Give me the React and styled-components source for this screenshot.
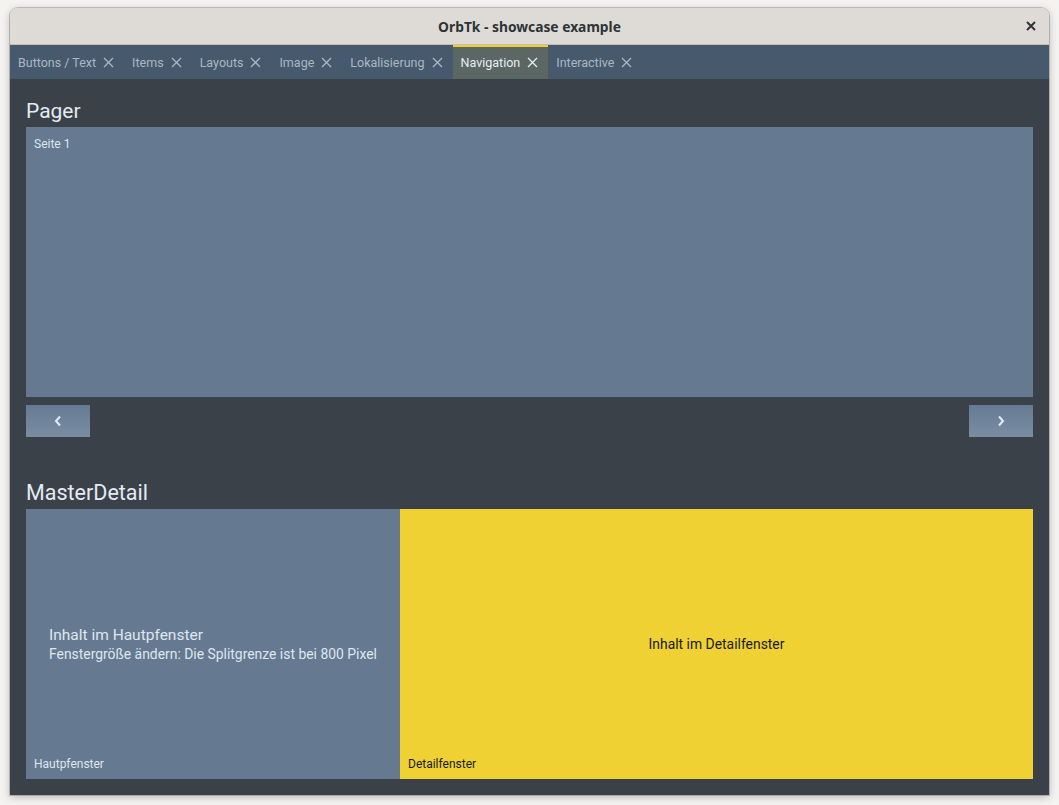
import React, { useState } from 'react';
import styled, { createGlobalStyle } from 'styled-components';

const GlobalStyle = createGlobalStyle`
  html, body {
    margin: 0;
    padding: 0;
    background: #f4f3f2;
  }
  body {
    font-family: Roboto, "Liberation Sans", sans-serif;
  }
`;

const Screen = styled.div`
  width: 1059px;
  height: 805px;
  padding: 8px 10px 0 10px;
  box-sizing: border-box;
`;

const Window = styled.div`
  width: 1039px;
  display: flex;
  flex-direction: column;
  border-radius: 8px 8px 0 0;
  overflow: hidden;
  box-shadow: 0 0 0 1px rgba(0, 0, 0, 0.18), 0 2px 8px rgba(0, 0, 0, 0.25);
`;

const TitleBar = styled.div`
  height: 36px;
  background: #dedbd7;
  border-bottom: 1px solid #c2bdb8;
  display: flex;
  align-items: center;
  justify-content: center;
  position: relative;
  font-family: "Noto Sans", "Open Sans", sans-serif;
  font-weight: 700;
  font-size: 13.8px;
  color: #2e3436;
`;

const CloseButton = styled.div`
  position: absolute;
  right: 13px;
  top: 13px;
  width: 10px;
  height: 10px;
  display: flex;
`;

const TabBar = styled.div`
  height: 34px;
  background: #475a6d;
  display: flex;
  align-items: stretch;
`;

const Tab = styled.div`
  display: flex;
  align-items: center;
  gap: 7px;
  padding: 0 10px 2px 8px;
  box-sizing: border-box;
  font-size: 12.5px;
  color: ${p => (p.$active ? '#e6ecf2' : '#a9b7c6')};
  background: ${p => (p.$active ? '#5b6763' : 'transparent')};
  border-top: 2px solid ${p => (p.$active ? '#f0ce2c' : 'transparent')};
  cursor: pointer;
`;

const Content = styled.div`
  background: #3b4149;
  padding: 16px;
  display: flex;
  flex-direction: column;
`;

const Heading = styled.div`
  height: 32px;
  line-height: 32px;
  font-size: ${p => p.$size || 21}px;
  color: #e4ebf2;
  margin-top: ${p => p.$gap || 0}px;
`;

const Pager = styled.div`
  height: 270px;
  background: #657a90;
  padding: 10px 8px;
  box-sizing: border-box;
  font-size: 12px;
  color: #dfe6ee;
`;

const NavRow = styled.div`
  display: flex;
  justify-content: space-between;
  margin-top: 8px;
`;

const NavButton = styled.button`
  width: 64px;
  height: 32px;
  border: none;
  padding: 0;
  display: flex;
  align-items: center;
  justify-content: center;
  background: linear-gradient(#647b92, #7a8ea3);
  cursor: pointer;
`;

const MasterDetail = styled.div`
  height: 270px;
  display: grid;
  grid-template-columns: 374px 1fr;
`;

const Pane = styled.div`
  position: relative;
  background: ${p => (p.$detail ? '#efd134' : '#657a90')};
  color: ${p => (p.$detail ? '#1a1a1a' : '#dfe6ee')};
  display: flex;
  flex-direction: column;
  justify-content: center;
  align-items: ${p => (p.$detail ? 'center' : 'flex-start')};
  padding: ${p => (p.$detail ? '0' : '0 0 0 23px')};
  box-sizing: border-box;
`;

const PaneLabel = styled.div`
  position: absolute;
  left: 8px;
  bottom: 8px;
  font-size: 12px;
`;

const MainTitle = styled.div`
  font-size: 15.5px;
  line-height: 20px;
`;

const MainSub = styled.div`
  font-size: 13.9px;
  line-height: 18px;
`;

const DetailText = styled.div`
  font-size: 13.9px;
`;

const TabClose = () => (
  <svg width="11" height="11" viewBox="0 0 11 11">
    <path d="M1 1 L10 10 M10 1 L1 10" stroke="currentColor" strokeWidth="1.3" fill="none" />
  </svg>
);

const Chevron = ({ dir }) => (
  <svg width="8" height="12" viewBox="0 0 8 12">
    <path
      d={dir === 'left' ? 'M6 1.5 L2 6 L6 10.5' : 'M2 1.5 L6 6 L2 10.5'}
      stroke="#e3ebf3"
      strokeWidth="2"
      fill="none"
    />
  </svg>
);

const tabs = ['Buttons / Text', 'Items', 'Layouts', 'Image', 'Lokalisierung', 'Navigation', 'Interactive'];

export default function App() {
  const [active, setActive] = useState('Navigation');
  const [page, setPage] = useState(1);

  return (
    <Screen>
      <GlobalStyle />
      <Window>
        <TitleBar>
          OrbTk - showcase example
          <CloseButton>
            <svg width="10" height="10" viewBox="0 0 10 10">
              <path d="M1 1 L9 9 M9 1 L1 9" stroke="#2e3436" strokeWidth="2" fill="none" />
            </svg>
          </CloseButton>
        </TitleBar>
        <TabBar>
          {tabs.map(t => (
            <Tab key={t} $active={t === active} onClick={() => setActive(t)}>
              {t}
              <TabClose />
            </Tab>
          ))}
        </TabBar>
        <Content>
          <Heading>Pager</Heading>
          <Pager>Seite {page}</Pager>
          <NavRow>
            <NavButton onClick={() => setPage(Math.max(1, page - 1))}>
              <Chevron dir="left" />
            </NavButton>
            <NavButton onClick={() => setPage(Math.min(3, page + 1))}>
              <Chevron dir="right" />
            </NavButton>
          </NavRow>
          <Heading $gap={40} $size={21.5}>MasterDetail</Heading>
          <MasterDetail>
            <Pane>
              <MainTitle>Inhalt im Hautpfenster</MainTitle>
              <MainSub>Fenstergröße ändern: Die Splitgrenze ist bei 800 Pixel</MainSub>
              <PaneLabel>Hautpfenster</PaneLabel>
            </Pane>
            <Pane $detail>
              <DetailText>Inhalt im Detailfenster</DetailText>
              <PaneLabel>Detailfenster</PaneLabel>
            </Pane>
          </MasterDetail>
        </Content>
      </Window>
    </Screen>
  );
}
